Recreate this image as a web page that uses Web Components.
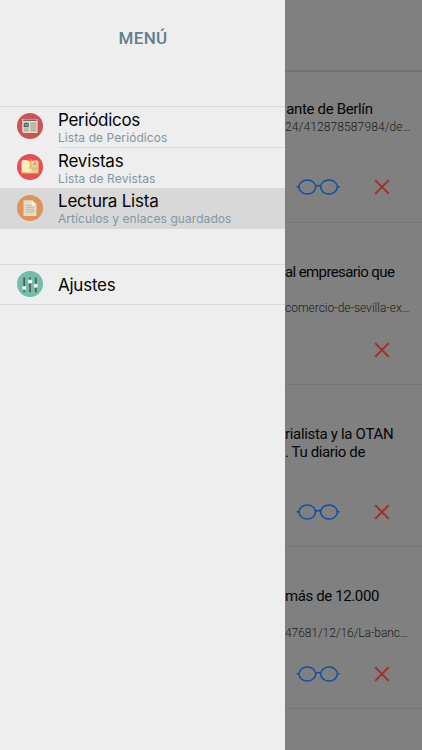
<!DOCTYPE html>
<html lang="es">
<head>
<meta charset="utf-8">
<title>Menú</title>
<style>
html,body{margin:0;height:100%;overflow:hidden;background:#808080}
</style>
</head>
<body>
<app-shell></app-shell>
<script>
const define = (name, html, setup) => customElements.define(name, class extends HTMLElement {
  constructor() {
    super();
    this.attachShadow({ mode: 'open' }).innerHTML = html;
  }
  connectedCallback() { if (setup) setup(this, this.shadowRoot); }
});

// One line of text, tracked so that it spans the width given in "w".
define('fit-text', `<style>:host{display:block;white-space:nowrap}span{display:inline-block}</style><span></span>`, (el, root) => {
  const span = root.querySelector('span');
  span.textContent = el.getAttribute('text');
  const w = parseFloat(el.getAttribute('w'));
  const n = [...span.textContent].length;
  span.style.letterSpacing = (w - span.getBoundingClientRect().width) / n + 'px';
});

const glyphs = {
  news: `<circle cx="13" cy="13" r="13" fill="#cb5459"/><path d="M5.2 6h15.4v14H7q-1.8 0-1.8-1.8z" fill="#e3dcc8"/><path d="M6.2 7.2h13.6" stroke="#4e5964" stroke-width="1.3"/><path d="M6.7 9.8h5v4.4h-5z" fill="#53606b"/><path d="M8 11.2l1.5 1.5 1-1.5" stroke="#c9d4d0" fill="none"/><path d="M13.3 10.3h6M13.3 12.2h6M13.3 14.1h6M6.7 16h5M6.7 17.8h5M13.3 16h6M13.3 17.8h6" stroke="#8c9491" stroke-width=".9"/>`,
  magazine: `<circle cx="13" cy="13" r="13" fill="#e54f58"/><path d="M4.3 7.2l8.6 1 8.8-1.2v12.4H4.3z" fill="#e7bf57"/><path d="M5.2 6.2q4.6-.5 7.6 1.3v11.2q-3-1-7.6-.6z" fill="#f8edc4"/><path d="M13 7.8q3-1.6 7.4-1.5v11.8q-4.4-.4-7.4.6z" fill="#eee0ae"/><path d="M12.8 5.4h1.8v9.6l-.9-1-.9 1z" fill="#efb63e"/><path d="M16.2 11.6l1.6-3.8 1.6 3.8M16.8 10.4h2" fill="none" stroke="#df7952" stroke-width=".8"/><path d="M15 13h5M15 14.7h5M15 16.3h5" stroke="#b9ad88" stroke-width=".8"/>`,
  page: `<circle cx="13" cy="13" r="13" fill="#dd935a"/><path d="M6.5 5.2h8.6l4.4 4.4v11.5h-13z" fill="#e4dcc5"/><path d="M14.9 5.2l4.6 4.6h-4.6z" fill="#fffdf4"/><path d="M8.7 10.5h5.5M8.7 12.6h8.5M8.7 14.7h8.5M8.7 16.8h8.5" stroke="#bdb6a3" stroke-width=".9"/>`,
  sliders: `<circle cx="13" cy="13" r="13" fill="#73bda9"/><path d="M7.2 6.5v14.7M13 6.5v14.7M18.8 6.5v14.7" stroke="#4e5d68" stroke-width="1.8"/><g fill="#fff"><circle cx="7.2" cy="17" r="2"/><circle cx="13" cy="10.4" r="2"/><circle cx="18.8" cy="14.7" r="2"/></g>`
};
define('menu-icon', `<style>:host{display:block;width:26px;height:26px;margin-bottom:.6px}svg{display:block}</style><svg width="26" height="26" viewBox="0 0 26 26"></svg>`,
  (el, root) => { root.querySelector('svg').innerHTML = glyphs[el.getAttribute('name')]; });

define('menu-item', `<style>
:host{display:flex;box-sizing:border-box;height:40.5px;padding-left:16.5px;align-items:center;gap:15.5px}
:host([selected]){background:#d8d8d8}
.body{flex:1;height:100%;box-sizing:border-box;display:flex;flex-direction:column;justify-content:center;padding-top:1.4px}
:host([ruled]) .body{border-bottom:1px solid #dcdcde;padding-top:1px}
</style><slot name="icon"></slot><div class="body"><slot></slot></div>`);

define('side-menu', `<style>
:host{display:flex;flex-direction:column;width:285px;height:750px;background:#eee;font-family:Inter,sans-serif;color:#050505}
header{height:106px;box-sizing:border-box;padding:27.5px 0 0 118.5px;font:500 17px/21px Roboto,sans-serif;color:#607f8c}
section{border-top:1px solid #dadadd}
.gap{margin-top:35px;border-bottom:1px solid #dadadd}
.gap menu-item{height:39px}
.t{font-size:17px;line-height:20px}
.s{font-size:12px;line-height:15px;color:#8496a1}
menu-item[ruled] menu-icon{margin-bottom:1.6px}
</style>
<header><fit-text text="MENÚ" w="49"></fit-text></header>
<section>
<menu-item ruled><menu-icon slot="icon" name="news"></menu-icon><fit-text class="t" text="Periódicos" w="82"></fit-text><fit-text class="s" text="Lista de Periódicos" w="109.5"></fit-text></menu-item>
<menu-item><menu-icon slot="icon" name="magazine"></menu-icon><fit-text class="t" text="Revistas" w="65.5"></fit-text><fit-text class="s" text="Lista de Revistas" w="97.5"></fit-text></menu-item>
<menu-item selected><menu-icon slot="icon" name="page"></menu-icon><fit-text class="t" text="Lectura Lista" w="100.5"></fit-text><fit-text class="s" text="Artículos y enlaces guardados" w="173.5"></fit-text></menu-item>
</section>
<section class="gap"><menu-item><menu-icon slot="icon" name="sliders"></menu-icon><fit-text class="t" text="Ajustes" w="57.5"></fit-text></menu-item></section>`);

define('read-icon', `<style>:host{display:block}svg{display:block}</style><svg width="44" height="16" viewBox="0 0 44 16" fill="none" stroke="#104da6" stroke-width="1.5"><ellipse cx="11.3" cy="8" rx="8.3" ry="7"/><ellipse cx="33" cy="8" rx="8.3" ry="7"/><path d="M.6 7.8h2.5M41.2 7.8h2.5M19.4 7.6q2.7-2.2 5.4 0"/></svg>`);
define('delete-icon', `<style>:host{display:block}svg{display:block}</style><svg width="16" height="16" viewBox="0 0 16 16" fill="none" stroke="#a92b27" stroke-width="1.9"><path d="M1.2 1.2l13.6 13.6M14.8 1.2L1.2 14.8"/></svg>`);

define('article-row', `<style>
:host{display:flex;flex-direction:column;box-sizing:border-box;height:162.2px;border-bottom:1px solid #777;padding:40.2px 0 0;overflow:hidden}
.text{height:79.3px}
.actions{display:flex;justify-content:flex-end;align-items:center;gap:34px;height:16px;padding-right:32.3px}
</style><div class="text"><slot></slot></div><div class="actions"><slot name="action"></slot><delete-icon></delete-icon></div>`);

define('article-feed', `<style>
:host{display:block;width:137px;height:750px;overflow:hidden;background:#808080;font-family:Roboto,sans-serif}
header{height:70px;border-bottom:2px solid #727272;box-sizing:content-box}
.t{font-size:15px;line-height:18.4px;color:#050505}
.u{font-size:12px;line-height:18px;font-weight:300;color:#1c1c1c}
.blank{height:18.4px}
article-row:first-of-type{height:150.5px;padding-top:27.9px}
</style>
<header></header>
<article-row><fit-text class="t" style="margin-left:1.2px" text="ante de Berlín" w="86.5"></fit-text><fit-text class="u" text="24/412878587984/de…" w="125.5"></fit-text><read-icon slot="action"></read-icon></article-row>
<article-row><fit-text class="t" text="al empresario que" w="109.3"></fit-text><div class="blank"></div><fit-text class="u" text="comercio-de-sevilla-ex…" w="124.5"></fit-text></article-row>
<article-row><fit-text class="t" text="rialista y la OTAN" w="108.3"></fit-text><fit-text class="t" text=". Tu diario de" w="80"></fit-text><read-icon slot="action"></read-icon></article-row>
<article-row><fit-text class="t" text="más de 12.000" w="94"></fit-text><div class="blank"></div><fit-text class="u" text="47681/12/16/La-banc…" w="122.5"></fit-text><read-icon slot="action"></read-icon></article-row>`);

define('app-shell', `<style>:host{display:flex;width:422px;height:750px;overflow:hidden}</style><side-menu></side-menu><article-feed></article-feed>`);
</script>
</body>
</html>
